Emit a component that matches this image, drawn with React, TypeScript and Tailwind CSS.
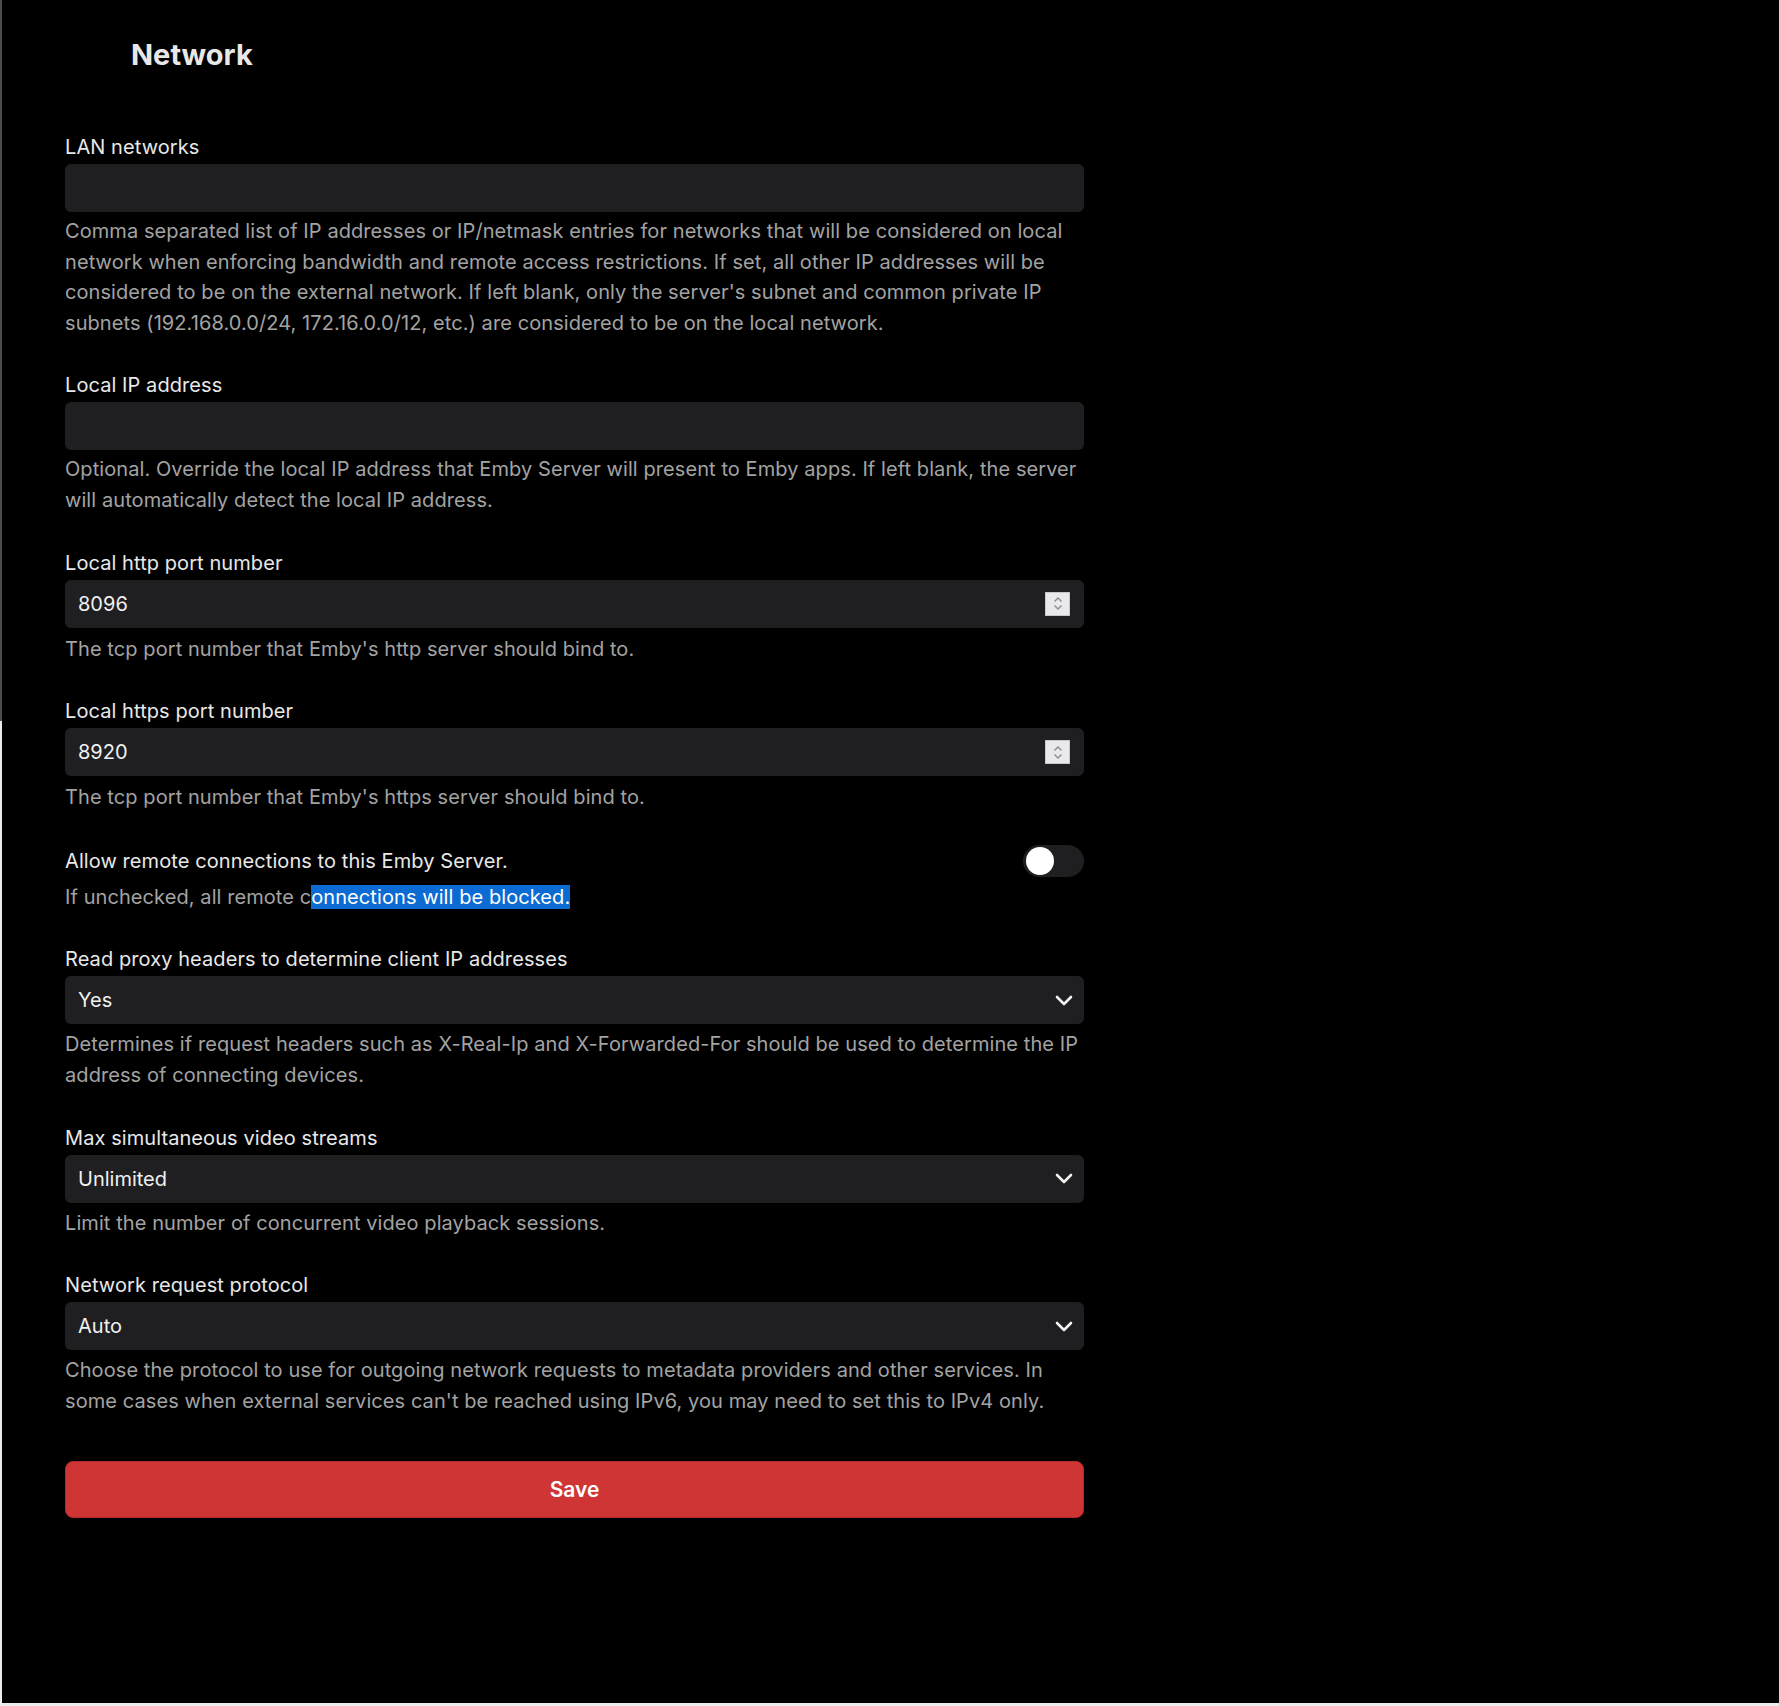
import type { ReactNode } from 'react'

function Label({ children }: { children: ReactNode }) {
  return <div className="text-[20px] leading-[30px] tracking-[0.08px] text-[#e8e8e8]">{children}</div>
}

function Help({ children, gap = 'mt-[4px]' }: { children: ReactNode; gap?: string }) {
  return <div className={`${gap} text-[20px] leading-[30.6px] tracking-[0.08px] text-[#a3a3a3]`}>{children}</div>
}

function TextField({ label, help }: { label: string; help: ReactNode }) {
  return (
    <div className="mb-[32px]">
      <Label>{label}</Label>
      <input
        type="text"
        className="mt-[2px] block h-[48px] w-full rounded-[6px] bg-[#1f1f21] px-[13px] text-[20px] text-[#f0f0f0] outline-none"
      />
      <Help>{help}</Help>
    </div>
  )
}

function Spinner() {
  return (
    <div className="flex h-[24px] w-[25px] flex-col items-center justify-center gap-[1px] border border-[#c8c8cc] bg-[#e9e9ed]">
      <svg width="10" height="7" viewBox="0 0 10 7" fill="none">
        <path d="M1.5 5.5 L5 2 L8.5 5.5" stroke="#8a8a90" strokeWidth="1.4" />
      </svg>
      <svg width="10" height="7" viewBox="0 0 10 7" fill="none">
        <path d="M1.5 1.5 L5 5 L8.5 1.5" stroke="#8a8a90" strokeWidth="1.4" />
      </svg>
    </div>
  )
}

function NumberField({ label, value, help }: { label: string; value: string; help: string }) {
  return (
    <div className="mb-[32px]">
      <Label>{label}</Label>
      <div className="mt-[2px] flex h-[48px] w-full items-center justify-between rounded-[6px] bg-[#1f1f21] pl-[13px] pr-[14px]">
        <span className="text-[20px] text-[#f0f0f0]">{value}</span>
        <Spinner />
      </div>
      <Help gap="mt-[6px]">{help}</Help>
    </div>
  )
}

function Chevron() {
  return (
    <svg width="18" height="11" viewBox="0 0 18 11" fill="none">
      <path d="M2 2 L9 9 L16 2" stroke="#f2f2f2" strokeWidth="2.6" strokeLinecap="round" strokeLinejoin="round" />
    </svg>
  )
}

function SelectField({ label, value, help }: { label: string; value: string; help: ReactNode }) {
  return (
    <div className="mb-[32px]">
      <Label>{label}</Label>
      <div className="mt-[2px] flex h-[48px] w-full items-center justify-between rounded-[6px] bg-[#1f1f21] pl-[13px] pr-[11px]">
        <span className="text-[20px] text-[#f0f0f0]">{value}</span>
        <Chevron />
      </div>
      <Help gap="mt-[5px]">{help}</Help>
    </div>
  )
}

export default function App() {
  return (
    <div className="flex h-[1706px] w-full flex-col bg-[#ececec] font-['Inter',sans-serif]">
      <div className="flex min-h-0 flex-1">
        {/* window edge */}
        <div className="flex w-[2px] flex-col">
          <div className="h-[721px] bg-[#4d4d4d]" />
          <div className="flex-1 bg-[#ececec]" />
        </div>

        <main className="flex-1 bg-black pt-[37px]">
          <h1 className="ml-[129px] text-[29px] font-bold leading-[36px] text-[#e8e8e8]">Network</h1>

          <div className="ml-[63px] mt-[59px] w-[1019px]">
            <TextField
              label="LAN networks"
              help="Comma separated list of IP addresses or IP/netmask entries for networks that will be considered on local network when enforcing bandwidth and remote access restrictions. If set, all other IP addresses will be considered to be on the external network. If left blank, only the server's subnet and common private IP subnets (192.168.0.0/24, 172.16.0.0/12, etc.) are considered to be on the local network."
            />
            <TextField
              label="Local IP address"
              help="Optional. Override the local IP address that Emby Server will present to Emby apps. If left blank, the server will automatically detect the local IP address."
            />
            <NumberField
              label="Local http port number"
              value="8096"
              help="The tcp port number that Emby's http server should bind to."
            />
            <NumberField
              label="Local https port number"
              value="8920"
              help="The tcp port number that Emby's https server should bind to."
            />

            {/* remote access toggle */}
            <div className="mb-[32px]">
              <div className="flex h-[32px] items-center justify-between">
                <Label>Allow remote connections to this Emby Server.</Label>
                <div className="flex h-[32px] w-[61px] items-center rounded-full bg-[#1f1f21] px-[3px]">
                  <div className="h-[28px] w-[28px] rounded-full bg-white" />
                </div>
              </div>
              <div className="mt-[5px] text-[20px] leading-[30.6px] tracking-[0.08px] text-[#a3a3a3]">
                If unchecked, all remote c
                <span className="bg-[#0b6bd3] text-white">onnections will be blocked.</span>
              </div>
            </div>

            <SelectField
              label="Read proxy headers to determine client IP addresses"
              value="Yes"
              help="Determines if request headers such as X-Real-Ip and X-Forwarded-For should be used to determine the IP address of connecting devices."
            />
            <SelectField
              label="Max simultaneous video streams"
              value="Unlimited"
              help="Limit the number of concurrent video playback sessions."
            />
            <SelectField
              label="Network request protocol"
              value="Auto"
              help="Choose the protocol to use for outgoing network requests to metadata providers and other services. In some cases when external services can't be reached using IPv6, you may need to set this to IPv4 only."
            />

            <button className="mt-[45px] flex h-[57px] w-full items-center justify-center rounded-[8px] border border-[#b32a2a] bg-[#d03535] text-[21px] font-semibold text-white">
              Save
            </button>
          </div>
        </main>
      </div>
      <div className="h-[3px] bg-[#ececec]" />
    </div>
  )
}
